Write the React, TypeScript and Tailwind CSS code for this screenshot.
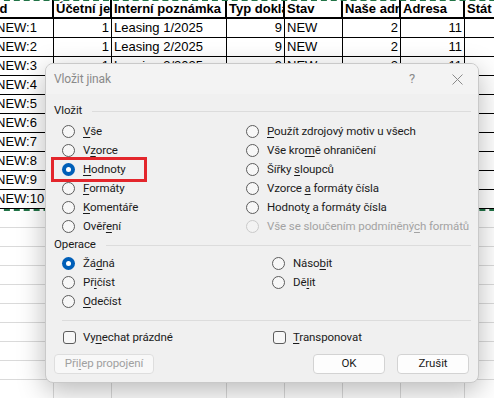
import type { ReactNode } from "react";

const COLS = "grid grid-cols-[60px_58px_115px_58px_58px_58px_64px_60px]";

const headers = ["Id", "Účetní jednotka", "Interní poznámka", "Typ dokladu", "Stav", "Naše adresa", "Adresa", "Stát"];

const rows = Array.from({ length: 10 }, (_, i) => ({
    id: `NEW:${i + 1}`,
    ucet: "1",
    pozn: `Leasing ${i + 1}/2025`,
    typ: "9",
    stav: "NEW",
    nase: "2",
    adr: "11",
    stat: "",
}));

const U = ({ children }: { children: ReactNode }) => (
    <span className="underline underline-offset-[2px] decoration-[1px]">{children}</span>
);

const Radio = ({ checked, disabled }: { checked?: boolean; disabled?: boolean }) =>
    checked ? (
        <span className="w-[13px] h-[13px] rounded-full bg-[#005fb8] flex items-center justify-center shrink-0">
            <span className="w-[5px] h-[5px] rounded-full bg-white" />
        </span>
    ) : (
        <span
            className={
                disabled
                    ? "w-[13px] h-[13px] rounded-full border border-[#cacaca] bg-[#f3f3f3] shrink-0"
                    : "w-[13px] h-[13px] rounded-full border border-[#5c5c5c] bg-[#f7f7f7] shrink-0"
            }
        />
    );

const Option = ({ label, checked, disabled }: { label: ReactNode; checked?: boolean; disabled?: boolean }) => (
    <div className="h-[19px] flex items-center gap-[8px]">
        <Radio checked={checked} disabled={disabled} />
        <span className={disabled ? "text-[#a3a3a3] whitespace-nowrap" : "text-[#1b1b1b] whitespace-nowrap"}>{label}</span>
    </div>
);

const Check = ({ label }: { label: ReactNode }) => (
    <div className="h-[19px] flex items-center gap-[7px]">
        <span className="w-[13px] h-[13px] rounded-[3px] border border-[#5c5c5c] bg-[#f7f7f7] shrink-0" />
        <span className="text-[#1b1b1b] whitespace-nowrap">{label}</span>
    </div>
);

const GroupLabel = ({ text }: { text: string }) => (
    <div className="h-[18px] flex items-center gap-[10px] pl-[8px] pr-[7px]">
        <span className="text-[#1b1b1b]">{text}</span>
        <div className="flex-1 h-px bg-[#dcdcdc]" />
    </div>
);

const Sheet = () => (
    <div className="overflow-hidden bg-white" style={{ fontFamily: '"Liberation Sans", Arial, sans-serif' }}>
        <div className="relative -ml-[6px] w-[531px] text-[13px] text-black">
            {/* copy marquee */}
            <div className="absolute left-0 right-0 top-[-1px] h-[212px] border-2 border-dashed border-[#217346] pointer-events-none" />
            <div className={COLS}>
                {headers.map((h) => (
                    <div key={h} className="h-[19px] border-r-2 border-b-2 border-black pl-[2px] font-bold leading-[17px] whitespace-nowrap overflow-hidden">
                        {h}
                    </div>
                ))}
            </div>
            {rows.map((r) => (
                <div key={r.id} className={COLS}>
                    {[r.id, r.ucet, r.pozn, r.typ, r.stav, r.nase, r.adr, r.stat].map((v, j) => (
                        <div
                            key={j}
                            className={
                                [1, 3, 5, 6].includes(j)
                                    ? "h-[19px] border-r border-b border-black pr-[2px] text-right leading-[18px] whitespace-nowrap overflow-hidden"
                                    : "h-[19px] border-r border-b border-black pl-[2px] leading-[18px] whitespace-nowrap overflow-hidden"
                            }
                        >
                            {v}
                        </div>
                    ))}
                </div>
            ))}
            {Array.from({ length: 10 }, (_, i) => (
                <div key={i} className={COLS}>
                    {headers.map((h) => (
                        <div key={h} className="h-[19px] border-r border-b border-[#dadada]" />
                    ))}
                </div>
            ))}
        </div>
    </div>
);

const Dialog = () => (
    <div
        className="absolute left-[45px] top-[63px] w-[434px] h-[320px] rounded-[8px] border border-[#c9c9c9] bg-[#f0f0f0] shadow-[0_8px_28px_rgba(0,0,0,0.28)] overflow-hidden flex flex-col text-[11.5px] tracking-[-0.1px]"
        style={{ fontFamily: 'Roboto, "Noto Sans", sans-serif' }}
    >
        {/* title bar */}
        <div className="h-[30px] bg-[#f3f3f3] flex items-center pl-[8px] pr-[15px] shrink-0">
            <span className="text-[#8a8a8a] flex-1 text-[12px]">Vložit jinak</span>
            <span className="text-[#8a8a8a] text-[13px] mr-[37px]">?</span>
            <svg width="11" height="11" viewBox="0 0 11 11" className="shrink-0">
                <path d="M0.5 0.5 L10.5 10.5 M10.5 0.5 L0.5 10.5" stroke="#8a8a8a" strokeWidth="1" />
            </svg>
        </div>

        <div className="pt-[8px] flex flex-col">
            <GroupLabel text="Vložit" />
            <div className="mt-[2px] grid grid-cols-[184px_1fr] pl-[16px]">
                <div>
                    <Option label={<><U>V</U>še</>} />
                    <Option label={<>V<U>z</U>orce</>} />
                    <Option label={<><U>H</U>odnoty</>} checked />
                    <Option label={<><U>F</U>ormáty</>} />
                    <Option label={<><U>K</U>omentáře</>} />
                    <Option label={<>Ověř<U>e</U>ní</>} />
                </div>
                <div>
                    <Option label={<><U>P</U>oužít zdrojový motiv u všech</>} />
                    <Option label={<>Vše kro<U>m</U>ě ohraničení</>} />
                    <Option label={<>Šířky <U>s</U>loupců</>} />
                    <Option label={<>Vzorce <U>a</U> formáty čísla</>} />
                    <Option label={<>Hodnot<U>y</U> a formáty čísla</>} />
                    <Option label={<>Vše se sloučením podmíněný<U>c</U>h formátů</>} disabled />
                </div>
            </div>

            <GroupLabel text="Operace" />
            <div className="grid grid-cols-[210px_1fr] pl-[16px]">
                <div>
                    <Option label={<>Žá<U>d</U>ná</>} checked />
                    <Option label={<>Př<U>i</U>číst</>} />
                    <Option label={<><U>O</U>dečíst</>} />
                </div>
                <div>
                    <Option label={<>Náso<U>b</U>it</>} />
                    <Option label={<>Dě<U>l</U>it</>} />
                </div>
            </div>

            <div className="mt-[9px] mx-[16px] mr-[7px] h-px bg-[#dcdcdc]" />

            <div className="mt-[7px] grid grid-cols-[210px_1fr] pl-[17px]">
                <Check label={<>Vy<U>n</U>echat prázdné</>} />
                <Check label={<><U>T</U>ransponovat</>} />
            </div>

            <div className="mt-[7px] flex items-center pl-[8px] pr-[9px]">
                <button className="w-[100px] h-[20px] rounded-[4px] border border-[#dedede] bg-[#f8f8f8] text-[#a0a0a0]">
                    Při<U>l</U>ep propojení
                </button>
                <div className="flex-1" />
                <button className="w-[72px] h-[20px] rounded-[4px] border border-[#d3d3d3] bg-[#fdfdfd] text-[#1b1b1b]">
                    OK
                </button>
                <button className="ml-[12px] w-[72px] h-[20px] rounded-[4px] border border-[#d3d3d3] bg-[#fdfdfd] text-[#1b1b1b]">
                    Zrušit
                </button>
            </div>
        </div>

        {/* highlight box */}
        <div className="absolute left-[5px] top-[93px] w-[96px] h-[25px] border-[3px] border-[#e3262c]" />
    </div>
);

export default function App() {
    return (
        <div className="relative w-[494px] h-[398px] overflow-hidden bg-white">
            <Sheet />
            <Dialog />
        </div>
    );
}
